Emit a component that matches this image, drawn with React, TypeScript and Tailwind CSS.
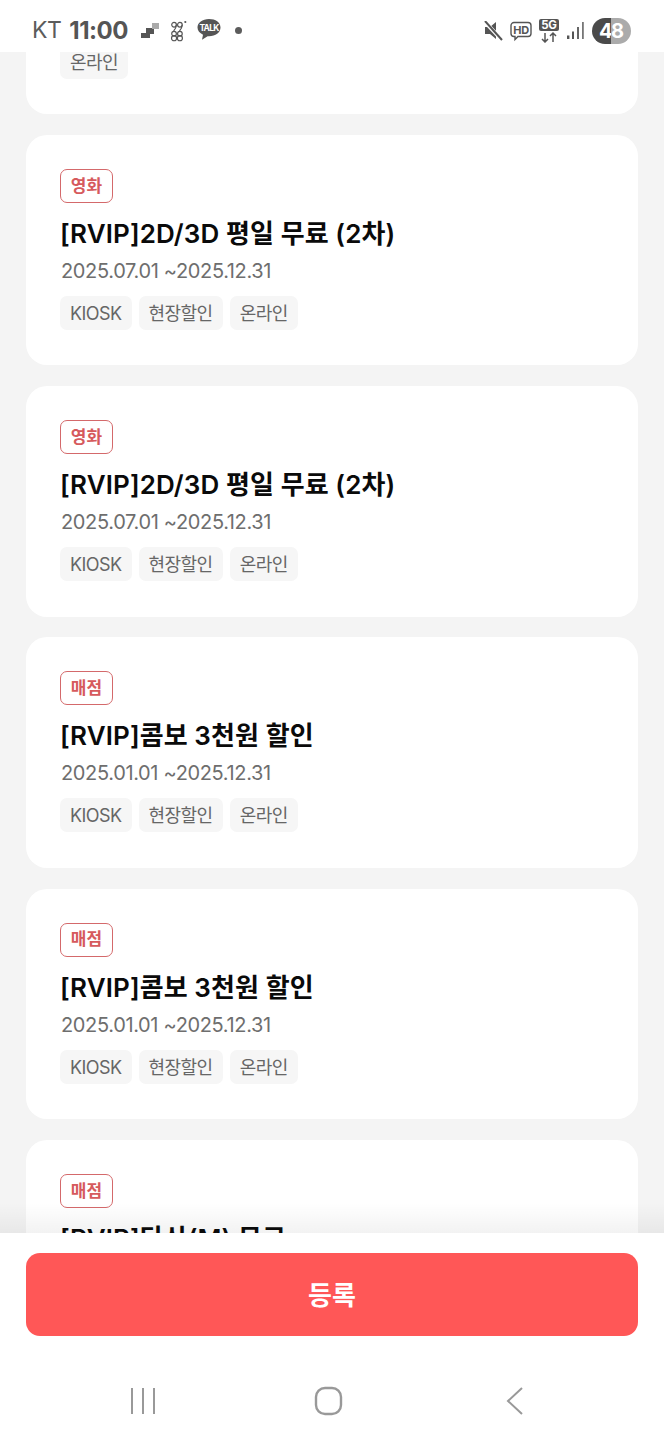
const font = { fontFamily: 'Inter, "Noto Sans CJK KR", sans-serif' };

type Item = { cat: string; title: string; date: string; tags: string[] };
const allTags = ["KIOSK", "현장할인", "온라인"];
const items: Item[] = [
  { cat: "영화", title: "[RVIP]2D/3D 평일 무료 (2차)", date: "2025.07.01 ~2025.12.31", tags: ["온라인"] },
  { cat: "영화", title: "[RVIP]2D/3D 평일 무료 (2차)", date: "2025.07.01 ~2025.12.31", tags: allTags },
  { cat: "영화", title: "[RVIP]2D/3D 평일 무료 (2차)", date: "2025.07.01 ~2025.12.31", tags: allTags },
  { cat: "매점", title: "[RVIP]콤보 3천원 할인", date: "2025.01.01 ~2025.12.31", tags: allTags },
  { cat: "매점", title: "[RVIP]콤보 3천원 할인", date: "2025.01.01 ~2025.12.31", tags: allTags },
  { cat: "매점", title: "[RVIP]탄산(M) 무료", date: "2025.01.01 ~2025.12.31", tags: allTags },
];

function Tag({ children }: { children: string }) {
  return (
    <span className="flex h-[34px] items-center rounded-[7px] bg-[#f6f6f6] px-[10px] pt-[1px] text-[18px] tracking-[-0.55px] text-[#666666]">
      {children}
    </span>
  );
}

function Card({ item }: { item: Item }) {
  return (
    <div className="h-[230.5px] shrink-0 rounded-[21px] bg-white pl-[34px] pt-[34px]">
      <span className="flex h-[34px] w-[53px] items-center justify-center rounded-[7px] border border-[#d4696b] pt-[1px] text-[17px] font-bold text-[#d65a5d]">
        {item.cat}
      </span>
      <div className="mt-[11px] h-[40px] text-[26px] font-semibold leading-[40px] tracking-[0.1px] text-[#0a0a0a]">
        {item.title}
      </div>
      <div className="mt-[2px] h-[30px] pl-[1px] text-[20px] leading-[30px] tracking-[-0.35px] text-[#6e6e6e]">{item.date}</div>
      <div className="mt-[10px] flex gap-[7px]">
        {item.tags.map((t) => (
          <Tag key={t}>{t}</Tag>
        ))}
      </div>
    </div>
  );
}

function StatusLeft() {
  return (
    <div className="flex items-center">
      <span className="ml-[32px] text-[23px] leading-none tracking-[-0.5px] text-[#5c5c5c]">KT</span>
      <span className="ml-[8px] text-[24px] font-bold leading-none tracking-[-0.5px] text-[#555555]">11:00</span>
      <svg className="ml-[13px]" width="18" height="16" viewBox="0 0 18 16">
        <rect x="0" y="10" width="9" height="5" fill="#555" />
        <rect x="5" y="5" width="8" height="6" fill="#555" />
        <rect x="11" y="0" width="7" height="6" fill="#aaa" />
      </svg>
      <svg className="ml-[11px]" width="18" height="24" viewBox="0 0 20 24" fill="none" stroke="#555" strokeWidth="1.3">
        <circle cx="4.5" cy="5" r="2.6" />
        <path d="M7 5c0 3-1 5-3 7" />
        <circle cx="11" cy="5" r="2.6" />
        <path d="M13.5 5c0 3-1 5-3 7" />
        <circle cx="4.5" cy="15" r="2.6" />
        <circle cx="4.5" cy="20" r="2.8" />
        <circle cx="11" cy="15" r="2.6" />
        <circle cx="11" cy="20" r="2.8" />
        <circle cx="17" cy="2" r="1.2" fill="#555" stroke="none" />
      </svg>
      <svg className="ml-[9px]" width="24" height="23" viewBox="0 0 24 23">
        <path d="M12 0C5.4 0 .5 4 .5 9.2c0 3.4 2.2 6.2 5.5 7.8L5 22.5l5.6-3.8H12c6.6 0 11.5-4 11.5-9.5S18.6 0 12 0z" fill="#555" transform="scale(1 .92)" />
        <text x="12" y="12" textAnchor="middle" fontSize="8.5" fontWeight="700" fill="#fff" fontFamily="Inter, sans-serif" letterSpacing="-0.8">TALK</text>
      </svg>
      <span className="ml-[14px] h-[7px] w-[7px] rounded-full bg-[#5c5c5c]" />
    </div>
  );
}

function StatusRight() {
  return (
    <div className="flex items-center">
      <svg width="20" height="20" viewBox="0 0 20 20" className="mr-[7px]">
        <path d="M1 6h5l6-5v17l-6-5H1z" fill="#555" transform="translate(1 0)" />
        <path d="M2 1l17 18" stroke="#fff" strokeWidth="4" />
        <path d="M2 0l17 19" stroke="#555" strokeWidth="2" />
      </svg>
      <svg width="22" height="22" viewBox="0 0 22 22" className="mr-[7px]">
        <path d="M4 2.5h14a3 3 0 0 1 3 3v8a3 3 0 0 1-3 3H8l-3 3v-3H4a3 3 0 0 1-3-3v-8a3 3 0 0 1 3-3z" fill="none" stroke="#555" strokeWidth="1.4" />
        <text x="11" y="13.8" textAnchor="middle" fontSize="11" fontWeight="700" fill="#555" fontFamily="Inter, sans-serif" letterSpacing="-0.3">HD</text>
      </svg>
      <svg width="20" height="24" viewBox="0 0 20 24" className="mr-[8px]">
        <rect x="0" y="0" width="20" height="12" rx="2" fill="#555" />
        <text x="10" y="10.3" textAnchor="middle" fontSize="11.5" fontWeight="700" fill="#fff" fontFamily="Inter, sans-serif" letterSpacing="-0.3">5G</text>
        <path d="M6 14v9M3 20l3 3 3-3M14 23v-9M11 17l3-3 3 3" fill="none" stroke="#555" strokeWidth="1.5" />
      </svg>
      <svg width="17" height="18" viewBox="0 0 17 18" className="mr-[8px]" fill="#555">
        <rect x="0" y="13.5" width="2.4" height="3.5" />
        <rect x="5" y="9.5" width="2" height="7.5" />
        <rect x="10" y="5" width="2" height="12" fill="#666" />
        <rect x="15" y="0" width="1.8" height="17" fill="#777" />
      </svg>
      <div className="mr-[33px] flex h-[26px] w-[39px] overflow-hidden rounded-full text-[20px] font-bold leading-[26px] text-white">
        <span className="w-[19px] bg-[#4a4a4a] pl-[7px]">4</span>
        <span className="w-[20px] bg-[#ababab]">8</span>
      </div>
    </div>
  );
}

export default function App() {
  return (
    <div className="flex h-[1440px] w-[664px] flex-col overflow-hidden bg-white" style={font}>
      <div className="flex h-[52px] shrink-0 items-center justify-between bg-white pt-[9px]">
        <StatusLeft />
        <StatusRight />
      </div>
      <div className="relative h-[1181px] shrink-0 overflow-hidden bg-[#f4f4f4]">
        <div className="mt-[-168.5px] flex flex-col gap-[20.75px] px-[26px]">
          {items.map((it, i) => (
            <Card key={i} item={it} />
          ))}
        </div>
        <div className="absolute inset-x-0 bottom-0 h-[30px] bg-gradient-to-b from-transparent to-black/5" />
      </div>
      <div className="relative flex-1 bg-white px-[26px] pt-[20px]">
        <button className="flex h-[83px] w-full items-center justify-center rounded-[14px] bg-[#ff5757] pt-[1px] text-[26px] font-bold text-white">
          등록
        </button>
        <div className="mt-[50px] flex items-center">
          <svg width="30" height="28" viewBox="0 0 30 28" className="ml-[102px]" stroke="#999" strokeWidth="2">
            <path d="M4 1v26M15 1v26M26 1v26" />
          </svg>
          <svg width="30" height="30" viewBox="0 0 30 30" className="ml-[155px]" fill="none" stroke="#999" strokeWidth="2.4">
            <rect x="3" y="2" width="25" height="26" rx="9" />
          </svg>
          <svg width="22" height="30" viewBox="0 0 22 30" className="ml-[161px]" fill="none" stroke="#999" strokeWidth="2">
            <path d="M18 2L4 15l14 13" />
          </svg>
        </div>
      </div>
    </div>
  );
}
